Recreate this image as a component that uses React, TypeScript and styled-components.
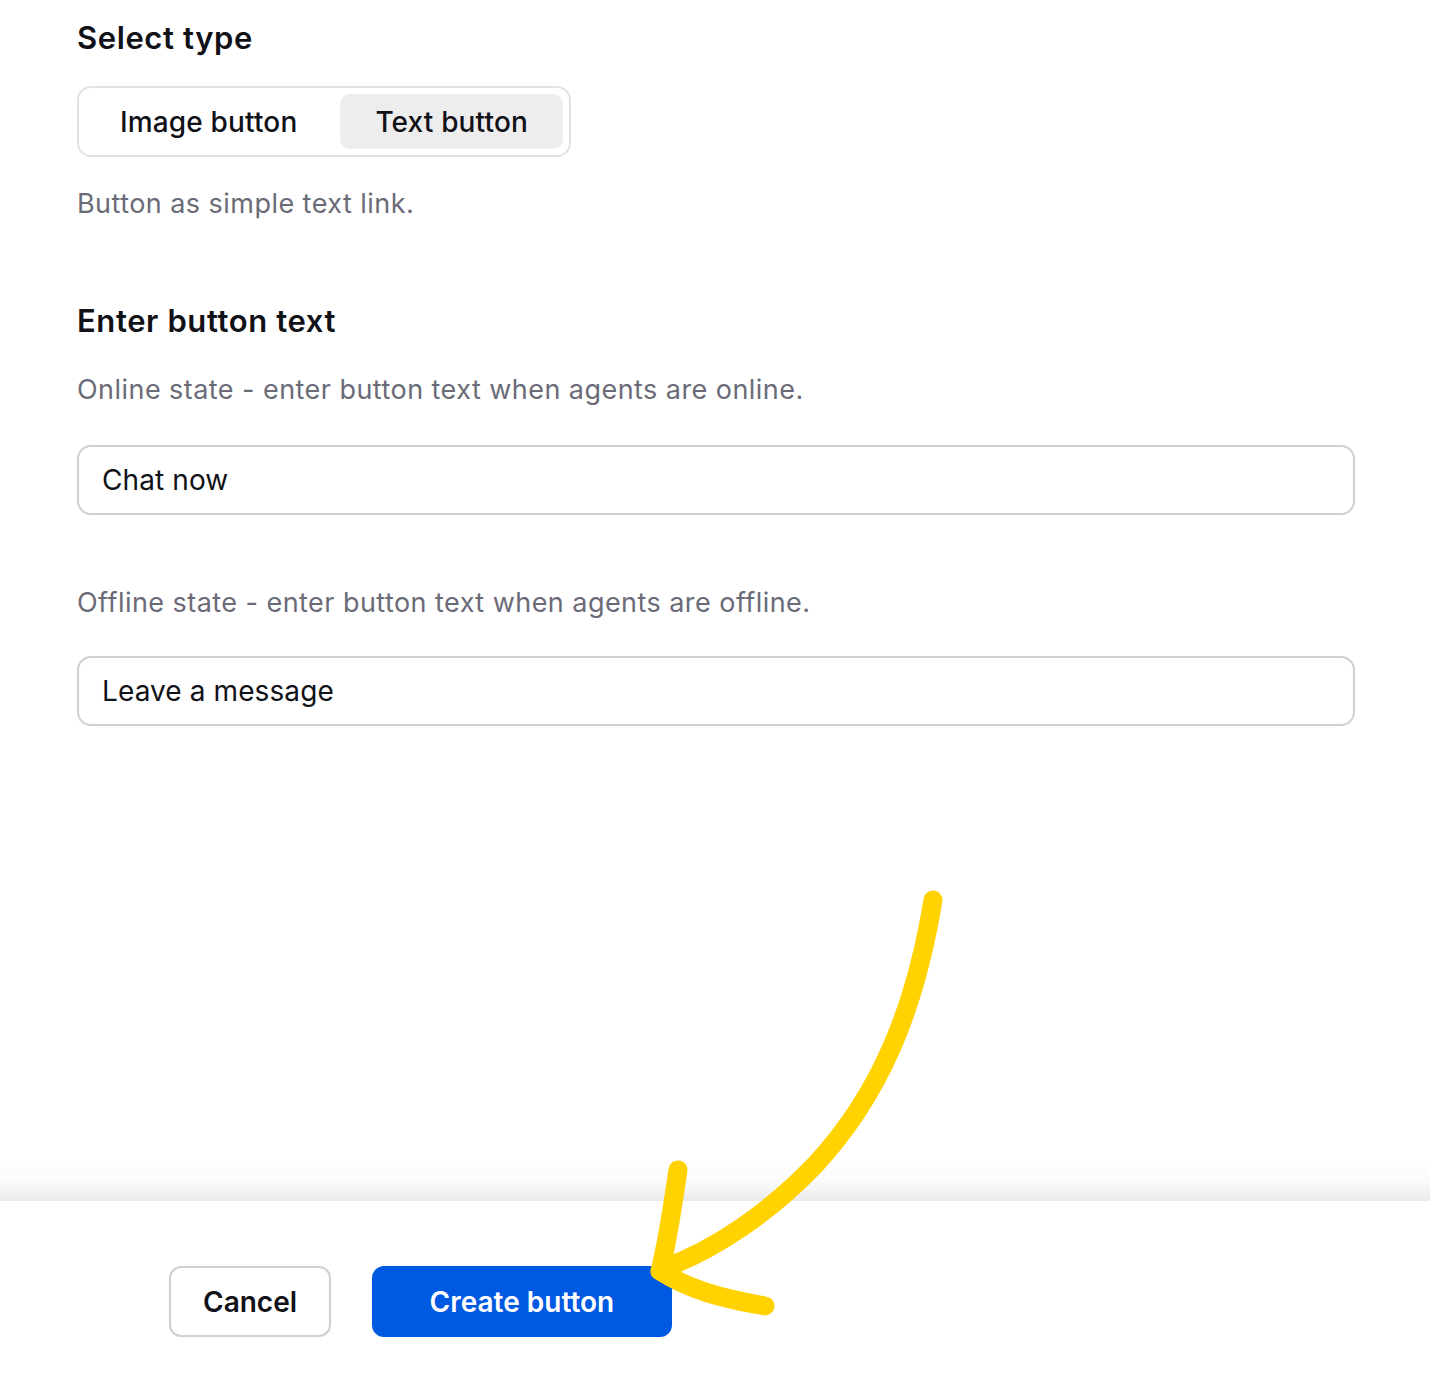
import React, { useState } from "react";
import styled, { createGlobalStyle } from "styled-components";

const GlobalStyle = createGlobalStyle`
  html, body {
    margin: 0;
    padding: 0;
    background: #ffffff;
  }
  body {
    font-family: Inter, "Noto Sans", "Liberation Sans", sans-serif;
    color: #111118;
    -webkit-font-smoothing: antialiased;
  }
`;

const Page = styled.div`
  position: relative;
  min-height: 1396px;
  display: flex;
  flex-direction: column;
  background: #ffffff;
`;

const Content = styled.main`
  flex: 1;
  display: flex;
  flex-direction: column;
  align-items: flex-start;
  padding: 21px 75px 0 77px;
`;

const SectionTitle = styled.h2<{ $gap?: number }>`
  margin: ${(p) => p.$gap ?? 0}px 0 0;
  font-size: 31px;
  line-height: 34px;
  font-weight: 600;
  letter-spacing: 0.6px;
  color: #111118;
`;

const Hint = styled.p<{ $gap: number }>`
  margin: ${(p) => p.$gap}px 0 0;
  font-size: 27px;
  line-height: 32px;
  font-weight: 400;
  letter-spacing: 0.45px;
  color: #6b6b78;
`;

const Segmented = styled.div`
  margin-top: 31px;
  display: flex;
  gap: 8px;
  padding: 6px;
  border: 2px solid #e3e3e6;
  border-radius: 14px;
`;

const Segment = styled.button<{ $active?: boolean }>`
  height: 55px;
  padding: 0 35px;
  border: none;
  border-radius: 10px;
  background: ${(p) => (p.$active ? "#ededee" : "transparent")};
  font-family: inherit;
  font-size: 28px;
  font-weight: 500;
  letter-spacing: 0.15px;
  color: #111118;
  cursor: pointer;
`;

const TextInput = styled.input<{ $gap: number }>`
  box-sizing: border-box;
  margin-top: ${(p) => p.$gap}px;
  width: 100%;
  height: 70px;
  padding: 0 23px;
  border: 2px solid #cfcfd4;
  border-radius: 14px;
  font-family: inherit;
  font-size: 28px;
  letter-spacing: 0.1px;
  color: #111118;
  outline: none;
  background: #fff;
`;

const Footer = styled.footer`
  position: relative;
  height: 195px;
  box-sizing: border-box;
  padding: 65px 0 0 169px;
  display: flex;
  align-items: flex-start;
  gap: 41px;
  background: #fff;

  &::before {
    content: "";
    position: absolute;
    left: 0;
    right: 0;
    top: -44px;
    height: 44px;
    background: linear-gradient(
      to bottom,
      rgba(0, 0, 0, 0) 0%,
      rgba(0, 0, 0, 0.015) 55%,
      rgba(0, 0, 0, 0.08) 100%
    );
  }
`;

const ActionButton = styled.button<{ $primary?: boolean }>`
  height: 71px;
  padding: 0 ${(p) => (p.$primary ? 55.5 : 32)}px;
  border-radius: 12px;
  border: 2px solid ${(p) => (p.$primary ? "#0059e1" : "#cfcfd4")};
  background: ${(p) => (p.$primary ? "#0059e1" : "#ffffff")};
  color: ${(p) => (p.$primary ? "#ffffff" : "#111118")};
  font-family: inherit;
  font-size: 28px;
  font-weight: 600;
  cursor: pointer;
`;

const Annotation = styled.svg`
  position: absolute;
  left: 0;
  top: 0;
  width: 1430px;
  height: 1396px;
  pointer-events: none;
`;

const App = () => {
  const [type, setType] = useState<"image" | "text">("text");
  const [online, setOnline] = useState("Chat now");
  const [offline, setOffline] = useState("Leave a message");

  return (
    <>
      <GlobalStyle />
      <Page>
        <Content>
          <SectionTitle>Select type</SectionTitle>
          <Segmented>
            <Segment $active={type === "image"} onClick={() => setType("image")}>
              Image button
            </Segment>
            <Segment $active={type === "text"} onClick={() => setType("text")}>
              Text button
            </Segment>
          </Segmented>
          <Hint $gap={31}>Button as simple text link.</Hint>

          <SectionTitle $gap={84}>Enter button text</SectionTitle>
          <Hint $gap={36}>Online state - enter button text when agents are online.</Hint>
          <TextInput $gap={39} value={online} onChange={(e) => setOnline(e.target.value)} />
          <Hint $gap={72}>Offline state - enter button text when agents are offline.</Hint>
          <TextInput $gap={37} value={offline} onChange={(e) => setOffline(e.target.value)} />
        </Content>

        <Footer>
          <ActionButton>Cancel</ActionButton>
          <ActionButton $primary>Create button</ActionButton>
        </Footer>

        {/* hand-drawn arrow pointing at the primary button */}
        <Annotation viewBox="0 0 1430 1396">
          <g fill="none" stroke="#ffd200" strokeWidth={19} strokeLinecap="round" strokeLinejoin="round">
            <path d="M933 900 C915 1010 880 1095 815 1165 C770 1212 715 1250 662 1269" />
            <path d="M678 1170 C672 1210 668 1240 660 1271 C690 1290 720 1298 765 1306" />
          </g>
        </Annotation>
      </Page>
    </>
  );
};

export default App;
